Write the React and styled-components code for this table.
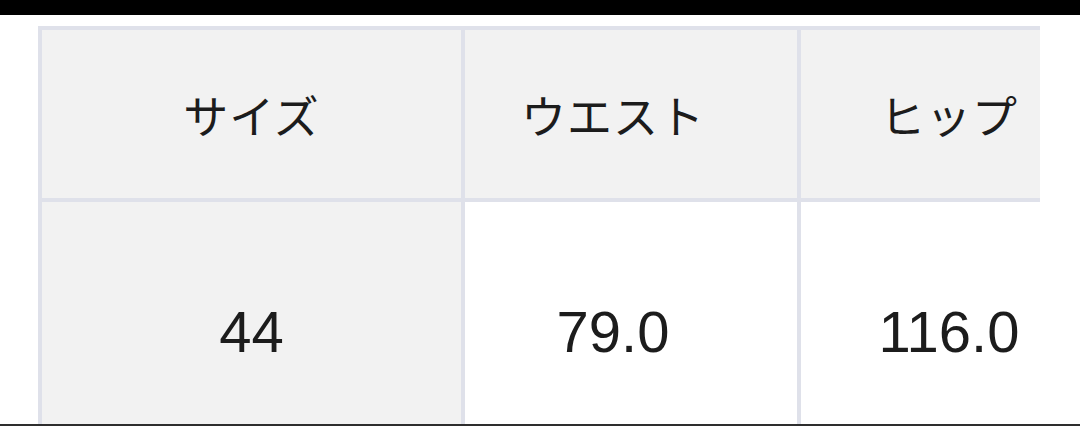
import styled, { createGlobalStyle } from "styled-components";

const GlobalStyle = createGlobalStyle`
  html, body {
    margin: 0;
    padding: 0;
    background: #fff;
  }
  body {
    font-family: "Liberation Sans", Arial, sans-serif;
  }
`;

const columns = ["サイズ", "ウエスト", "ヒップ"];
const rows = [["44", "79.0", "116.0"]];

const App = () => {
  return (
    <>
      <GlobalStyle />
      <Screen>
        <TopBar />
        <Content>
          <TableWrap>
            <SizeGrid>
              {columns.map((c, i) => (
                <HeadCell key={c} $first={i === 0}>
                  {c}
                </HeadCell>
              ))}
              {rows.map((r) =>
                r.map((v, i) => (
                  <BodyCell key={i} $first={i === 0}>
                    {v}
                  </BodyCell>
                ))
              )}
            </SizeGrid>
          </TableWrap>
        </Content>
        <BottomBar />
      </Screen>
    </>
  );
};

export default App;

const Screen = styled.div`
  width: 1080px;
  height: 426px;
  display: flex;
  flex-direction: column;
  overflow: hidden;
  background: #fff;
`;

const TopBar = styled.div`
  height: 15px;
  flex-shrink: 0;
  background: #000;
`;

const BottomBar = styled.div`
  height: 2px;
  flex-shrink: 0;
  background: #2e2e2e;
`;

const Content = styled.div`
  flex: 1;
  overflow: hidden;
  padding: 11px 0 0 38px;
`;

const TableWrap = styled.div`
  width: 1002px;
  overflow: hidden;
`;

const SizeGrid = styled.div`
  display: grid;
  grid-template-columns: 419px 332px 332px;
  grid-template-rows: 168px 259px;
  gap: 4px;
  padding: 4px 0 0 4px;
  width: max-content;
  background: #dfe1ea;
`;

const Cell = styled.div`
  display: flex;
  align-items: center;
  justify-content: center;
  padding-right: ${(p) => (p.$first ? "0" : "36px")};
  color: #1c1c1c;
`;

const HeadCell = styled(Cell)`
  background: #f2f2f2;
  font-family: "Noto Sans CJK JP", "Noto Sans", sans-serif;
  font-size: 45px;
  line-height: 1;
  letter-spacing: 1px;
`;

const BodyCell = styled(Cell)`
  background: ${(p) => (p.$first ? "#f2f2f2" : "#fff")};
  font-family: "Liberation Sans", Arial, sans-serif;
  font-size: 58px;
  line-height: 58px;
`;
